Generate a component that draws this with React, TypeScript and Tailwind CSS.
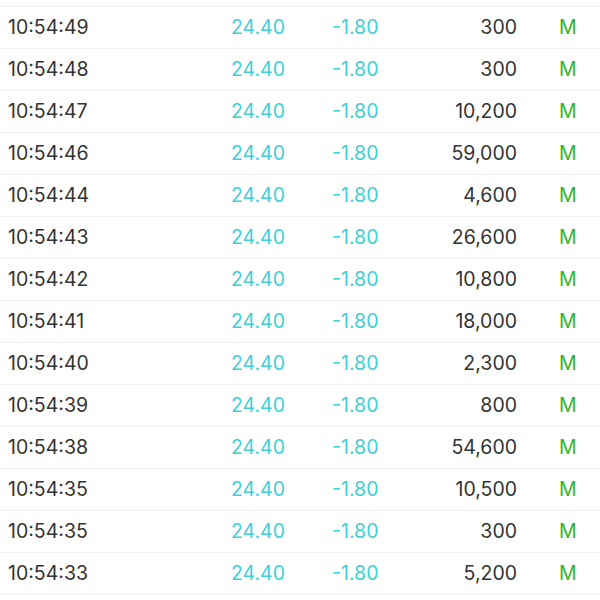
import React from "react";

const rows: [string, string][] = [
  ["10:54:49", "300"],
  ["10:54:48", "300"],
  ["10:54:47", "10,200"],
  ["10:54:46", "59,000"],
  ["10:54:44", "4,600"],
  ["10:54:43", "26,600"],
  ["10:54:42", "10,800"],
  ["10:54:41", "18,000"],
  ["10:54:40", "2,300"],
  ["10:54:39", "800"],
  ["10:54:38", "54,600"],
  ["10:54:35", "10,500"],
  ["10:54:35", "300"],
  ["10:54:33", "5,200"],
];

export default function App() {
  return (
    <div
      className="w-[600px] h-[600px] bg-white overflow-hidden text-[19.5px] text-[#333333]"
      style={{ fontFamily: "Inter, 'Liberation Sans', sans-serif" }}
    >
      <div className="h-[7px] border-b border-[#f0f0f0]" />
      {rows.map(([t, v], i) => (
        <div key={i} className="flex items-center h-[42px] border-b border-[#f0f0f0] pl-2 pt-[1px]">
          <div className="w-[200px]">{t}</div>
          <div className="w-[77px] text-right text-[#40cfd6]">24.40</div>
          <div className="w-[100px] ml-[47px] text-[#40cfd6]">-1.80</div>
          <div className="w-[85px] text-right">{v}</div>
          <div className="ml-[42px] text-[#2db82d]">M</div>
        </div>
      ))}
    </div>
  );
}
